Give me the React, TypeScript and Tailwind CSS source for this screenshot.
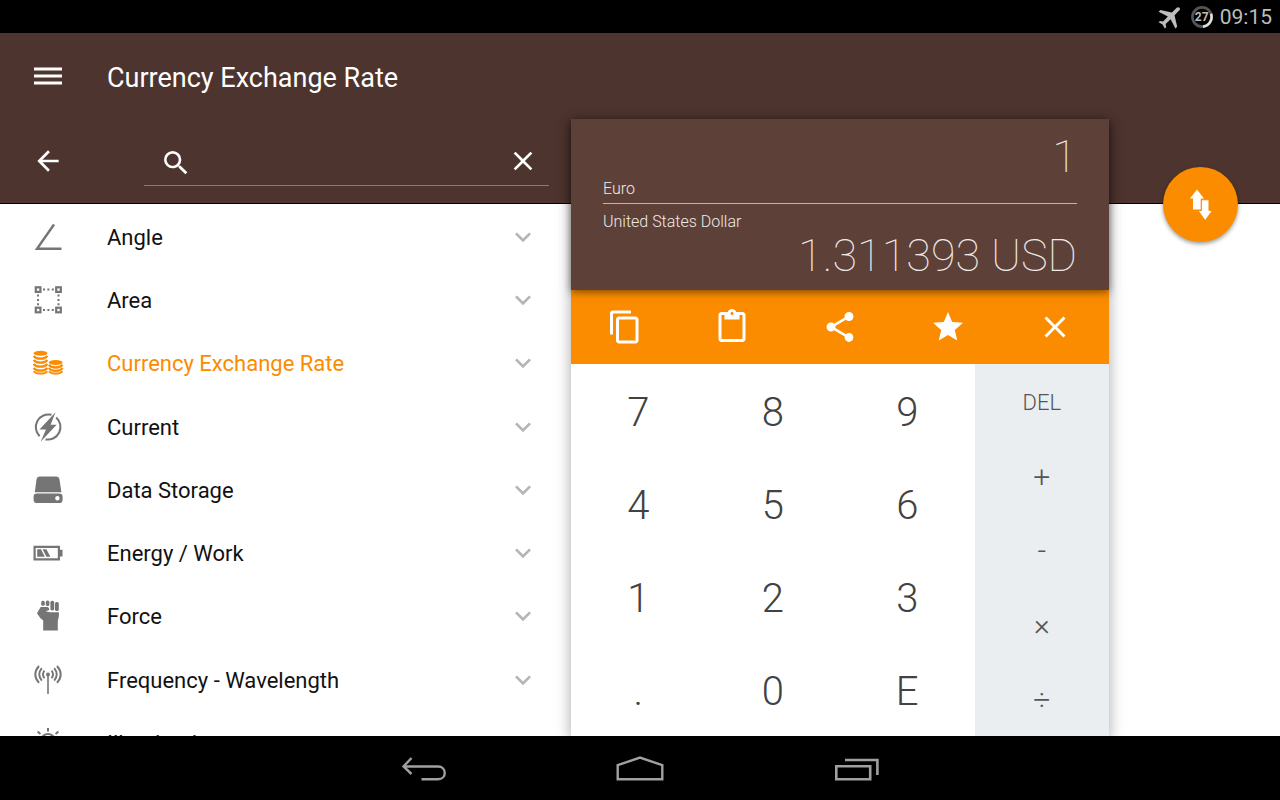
import { useState } from "react";
import type { ReactNode } from "react";
import {
  MdArrowBack,
  MdClose,
  MdContentCopy,
  MdContentPaste,
  MdExpandMore,
  MdFlight,
  MdSearch,
  MdShare,
  MdStar,
} from "react-icons/md";

const AngleIcon = () => (
  <svg viewBox="0 0 32 32" className="size-8" fill="none" stroke="currentColor" strokeWidth="2.4">
    <path d="M22 3.5 L5 27.8 H29.5" />
  </svg>
);

const AreaIcon = () => (
  <svg viewBox="0 0 32 32" className="size-8" fill="none" stroke="currentColor" strokeWidth="2.2">
    <rect x="3.8" y="3.3" width="4.6" height="4.6" />
    <rect x="24.2" y="3.3" width="4.6" height="4.6" />
    <rect x="3.8" y="23.7" width="4.6" height="4.6" />
    <rect x="24.2" y="23.7" width="4.6" height="4.6" />
    <path d="M11 5.6 H23 M11 26 H23 M6 10.5 V22 M26.5 10.5 V22" strokeWidth="2" strokeDasharray="2 2.4" />
  </svg>
);

const CoinsIcon = () => (
  <svg viewBox="0 0 32 32" className="size-8" fill="none" stroke="currentColor" strokeWidth="2.4">
    <ellipse cx="8.5" cy="6.2" rx="6.8" ry="2.5" fill="currentColor" stroke="none" />
    <path d="M1.8 8.8 C4 12.6 13 12.6 15.2 8.8 M1.8 12.8 C4 16.6 13 16.6 15.2 12.8 M1.8 16.8 C4 20.6 13 20.6 15.2 16.8 M1.8 20.8 C4 24.6 13 24.6 15.2 20.8" />
    <path d="M1.8 24.2 C4 27.4 13 27.4 15.2 24.2" strokeWidth="2" />
    <ellipse cx="23.7" cy="15.4" rx="6.8" ry="2.5" fill="currentColor" stroke="none" />
    <path d="M17 17.6 C19.2 21.4 28.2 21.4 30.4 17.6 M17 21 C19.2 24.8 28.2 24.8 30.4 21" />
    <path d="M17 24.2 C19.2 27.4 28.2 27.4 30.4 24.2" strokeWidth="2" />
  </svg>
);

const CurrentIcon = () => (
  <svg viewBox="0 0 32 32" className="size-8">
    <path
      d="M19.5 3.8 A12.7 12.7 0 0 0 7.6 25.2 M24.2 6.4 A12.7 12.7 0 0 1 13.5 28.4"
      fill="none"
      stroke="currentColor"
      strokeWidth="2"
    />
    <path d="M23.5 1.2 L7.5 18.6 H14 L8.6 30.8 L24.6 13.8 H18.6 Z" fill="currentColor" />
  </svg>
);

const DriveIcon = () => (
  <svg viewBox="0 0 32 32" className="size-8" fill="currentColor">
    <path d="M7.5 2.5 H24.5 Q27 2.5 27.4 5 L29.4 18.2 H2.8 L4.6 5 Q5 2.5 7.5 2.5 Z" />
    <path
      fillRule="evenodd"
      d="M5 19.4 H27 Q30.6 19.4 30.6 22.4 V25.4 Q30.6 29 27 29 H5 Q1.6 29 1.6 25.4 V22.4 Q1.6 19.4 5 19.4 Z M25.4 22 A2.2 2.2 0 1 0 25.4 26.4 A2.2 2.2 0 1 0 25.4 22 Z"
    />
  </svg>
);

const BatteryIcon = () => (
  <svg viewBox="0 0 32 32" className="size-8" fill="currentColor">
    <path fillRule="evenodd" d="M1.5 8.8 H28 V12.8 H30.5 V19.4 H28 V23.4 H1.5 Z M3.7 11 V21.2 H25.8 V11 Z" />
    <path d="M5.2 12.3 H9 L12.8 19.8 H5.2 Z M10.6 12.3 H14.4 L18.4 19.8 H14.4 Z" />
  </svg>
);

const FistIcon = () => (
  <svg viewBox="0 0 32 32" className="size-8" fill="currentColor">
    <rect x="9.2" y="0.8" width="3.6" height="5" rx="1.6" />
    <rect x="13.8" y="0.4" width="3.6" height="5.6" rx="1.6" />
    <rect x="18.4" y="0.8" width="3.8" height="9.6" rx="1.6" />
    <rect x="23" y="2" width="3.8" height="9" rx="1.6" />
    <path d="M8.6 7 H15.6 Q17.6 7.4 17.2 10 L13.6 11.2 L18 12.2 H26.9 V16 Q26.4 19 25.8 20.4 V30.6 H11.2 V20.6 Q8 18.4 5 13.2 Z" />
  </svg>
);

const AntennaIcon = () => (
  <svg viewBox="0 0 32 32" className="size-8" fill="none" stroke="currentColor" strokeWidth="1.9">
    <circle cx="16" cy="10.4" r="2" fill="currentColor" stroke="none" />
    <path d="M16 11 V30" strokeWidth="1.6" />
    <path d="M12.4 6.6 Q9.6 10.4 12.4 14.2 M9.8 4.2 Q4.8 10.4 9.8 16.6 M7 2 Q-0.4 10.4 7 18.8" />
    <path d="M19.6 6.6 Q22.4 10.4 19.6 14.2 M22.2 4.2 Q27.2 10.4 22.2 16.6 M25 2 Q32.4 10.4 25 18.8" />
  </svg>
);

const SunIcon = () => (
  <svg viewBox="0 0 32 32" className="size-8" fill="none" stroke="currentColor" strokeWidth="2">
    <circle cx="16" cy="14" r="7" />
    <path d="M16 1 V4.6 M16 23.4 V27 M2 14 H6 M26 14 H30 M5.6 4.6 L8.4 7 M26.4 4.6 L23.6 7 M5.6 23.4 L8.4 21 M26.4 23.4 L23.6 21" />
  </svg>
);

const SwapIcon = () => (
  <svg viewBox="0 0 24 32" className="h-8 w-6" fill="#ffffff">
    <path d="M8 0.5 L15 9.5 H11.8 V20.5 H4 V9.5 H1 Z" />
    <path
      d="M12.4 10.8 H20 V21.6 H23.4 L16.2 31.6 L9 21.6 H12.4 Z"
      stroke="#fb8c00"
      strokeWidth="1"
    />
  </svg>
);

const categories: { name: string; icon: ReactNode }[] = [
  { name: "Angle", icon: <AngleIcon /> },
  { name: "Area", icon: <AreaIcon /> },
  { name: "Currency Exchange Rate", icon: <CoinsIcon /> },
  { name: "Current", icon: <CurrentIcon /> },
  { name: "Data Storage", icon: <DriveIcon /> },
  { name: "Energy / Work", icon: <BatteryIcon /> },
  { name: "Force", icon: <FistIcon /> },
  { name: "Frequency - Wavelength", icon: <AntennaIcon /> },
  { name: "Illumination", icon: <SunIcon /> },
];

const actions = [
  { label: "Copy", Icon: MdContentCopy },
  { label: "Paste", Icon: MdContentPaste },
  { label: "Share", Icon: MdShare },
  { label: "Favorite", Icon: MdStar },
  { label: "Clear", Icon: MdClose },
];

const keys = ["7", "8", "9", "4", "5", "6", "1", "2", "3", ".", "0", "E"];
const operators = ["+", "-", "×", "÷"];

const StatusBar = () => (
  <div className="flex h-[33px] shrink-0 items-center justify-end gap-1 bg-black px-2 text-[#bdbdbd]">
    <MdFlight className="size-[30px] rotate-45" />
    <div className="grid size-6 place-items-center">
      <svg viewBox="0 0 24 24" className="col-start-1 row-start-1 size-6" fill="none" strokeWidth="2.6">
        <circle cx="12" cy="12" r="9.6" stroke="#555555" />
        <path d="M21 8.8 A9.6 9.6 0 0 1 13 21.6" stroke="#e0e0e0" />
      </svg>
      <span className="col-start-1 row-start-1 text-[12px] leading-none font-bold">27</span>
    </div>
    <span className="pt-0.5 pl-0.5 text-[21px] leading-none">09:15</span>
  </div>
);

const Header = ({ title }: { title: string }) => {
  const [query, setQuery] = useState("");

  return (
    <header className="col-span-full col-start-1 row-start-1 grid grid-cols-subgrid border-b border-black bg-[#4e342e] text-white">
      <div className="flex h-[170px] flex-col">
        <div className="flex h-[86px] items-center">
          <button aria-label="Menu" className="flex w-24 justify-center">
            <svg viewBox="0 0 28 18" className="h-[18px] w-7" fill="#ffffff">
              <path d="M0 0.5 H28 V3.5 H0 Z M0 7.5 H28 V10.5 H0 Z M0 14.5 H28 V17.5 H0 Z" />
            </svg>
          </button>
          <h1 className="pt-1 pl-[11px] text-[27px] leading-8 whitespace-nowrap">{title}</h1>
        </div>
        <div className="flex h-[84px] items-center">
          <button aria-label="Back" className="flex w-24 justify-center">
            <MdArrowBack className="size-8" />
          </button>
          <div className="mr-[22px] ml-12 flex h-[50px] min-w-0 flex-1 items-center border-b border-[#8a7974] pl-4">
            <label htmlFor="search" aria-label="Search" className="pt-1">
              <MdSearch className="size-8" />
            </label>
            <input
              id="search"
              type="text"
              value={query}
              onChange={(e) => setQuery(e.target.value)}
              className="min-w-0 flex-1 bg-transparent px-3 text-[22px] outline-none"
            />
            <button aria-label="Clear search" onClick={() => setQuery("")} className="mr-2.5">
              <MdClose className="size-8" />
            </button>
          </div>
        </div>
      </div>
    </header>
  );
};

const Calculator = () => (
  <section className="z-10 col-start-2 row-span-2 row-start-1 mt-[86px] flex flex-col bg-white shadow-[0_4px_14px_rgba(0,0,0,0.35)]">
    <div className="z-10 h-[171px] bg-[#5d4037] px-8 pt-4 text-[#eeeae9] shadow-[0_2px_8px_rgba(0,0,0,0.5)]">
      <div className="text-right text-[45px] leading-[44px] font-thin">1</div>
      <div className="border-b border-[#f0a868] pb-1 text-[16px] leading-5 font-light">Euro</div>
      <div className="pt-2 text-[16px] leading-5 font-light">United States Dollar</div>
      <div className="pt-0.5 text-right text-[45px] leading-[44px] font-thin whitespace-nowrap">1.311393 USD</div>
    </div>
    <div className="grid h-[74px] shrink-0 grid-cols-5 bg-[#fb8c00] text-white">
      {actions.map(({ label, Icon }) => (
        <button key={label} aria-label={label} className="flex items-center justify-center">
          <Icon className="size-9" />
        </button>
      ))}
    </div>
    <div className="flex min-h-0 flex-1">
      <div className="grid flex-3 grid-cols-3 grid-rows-4 text-[40px] leading-none font-light text-[#424242]">
        {keys.map((key) => (
          <button key={key} className="pt-1">
            {key}
          </button>
        ))}
      </div>
      <div className="grid flex-1 grid-rows-5 bg-[#eaeef1] leading-none font-light text-[#555555]">
        <button className="pt-1 text-[22px]">DEL</button>
        {operators.map((op) => (
          <button key={op} className="pt-0.5 text-[30px]">
            {op}
          </button>
        ))}
      </div>
    </div>
  </section>
);

const NavBar = () => (
  <nav className="flex h-16 shrink-0 items-center justify-center bg-black pt-0.5 text-[#a0a0a0]">
    <button aria-label="Back" className="flex w-[216px] justify-center">
      <svg viewBox="0 0 48 32" className="h-8 w-12" fill="none" stroke="currentColor" strokeWidth="2.4">
        <path d="M11.5 5 L3.5 13.5 L11.5 21 M4 13.5 H38 C47 13.5 47 26.3 38 26.3 H21.5" />
      </svg>
    </button>
    <button aria-label="Home" className="flex w-[216px] justify-center">
      <svg viewBox="0 0 48 32" className="h-8 w-12" fill="none" stroke="currentColor" strokeWidth="2.4">
        <path d="M1.7 26.3 V12.2 L24 4.6 L46.3 12.2 V26.3 Z" />
      </svg>
    </button>
    <button aria-label="Recent apps" className="flex w-[216px] justify-center">
      <svg viewBox="0 0 48 32" className="h-8 w-12" fill="none" stroke="currentColor" strokeWidth="2.6">
        <path d="M4.3 13.3 H38.2 V26.2 H4.3 Z M13 7 H45.4 V22" />
      </svg>
    </button>
  </nav>
);

export default function App() {
  const [selected, setSelected] = useState("Currency Exchange Rate");

  return (
    <div className="flex h-screen flex-col overflow-hidden bg-white font-['Roboto',sans-serif]">
      <StatusBar />
      <main className="grid min-h-0 flex-1 grid-cols-[571fr_538fr_171fr] grid-rows-[auto_minmax(0,1fr)]">
        <Header title={selected} />

        <ul className="col-start-1 row-start-2 grid auto-rows-[11.9%] overflow-hidden">
          {categories.map(({ name, icon }) => (
            <li key={name}>
              <button
                onClick={() => setSelected(name)}
                className={`flex h-full w-full items-center pt-0.5 pr-8 text-left text-[22px] leading-7 ${
                  selected === name ? "text-[#fb8c00]" : "text-[#111111]"
                }`}
              >
                <span
                  className={`flex w-24 justify-center ${selected === name ? "text-[#fb8c00]" : "text-[#757575]"}`}
                >
                  {icon}
                </span>
                <span className="flex-1 pt-0.5 pl-[11px]">{name}</span>
                <MdExpandMore className="size-8 text-[#b5b5b5]" />
              </button>
            </li>
          ))}
        </ul>

        <Calculator />

        <button
          aria-label="Swap units"
          className="z-20 col-start-3 row-start-1 mr-[42px] -mb-[38px] flex size-[75px] items-center justify-center self-end justify-self-end rounded-full bg-[#fb8c00] shadow-[0_2px_4px_rgba(0,0,0,0.4)]"
        >
          <SwapIcon />
        </button>
      </main>
      <NavBar />
    </div>
  );
}
